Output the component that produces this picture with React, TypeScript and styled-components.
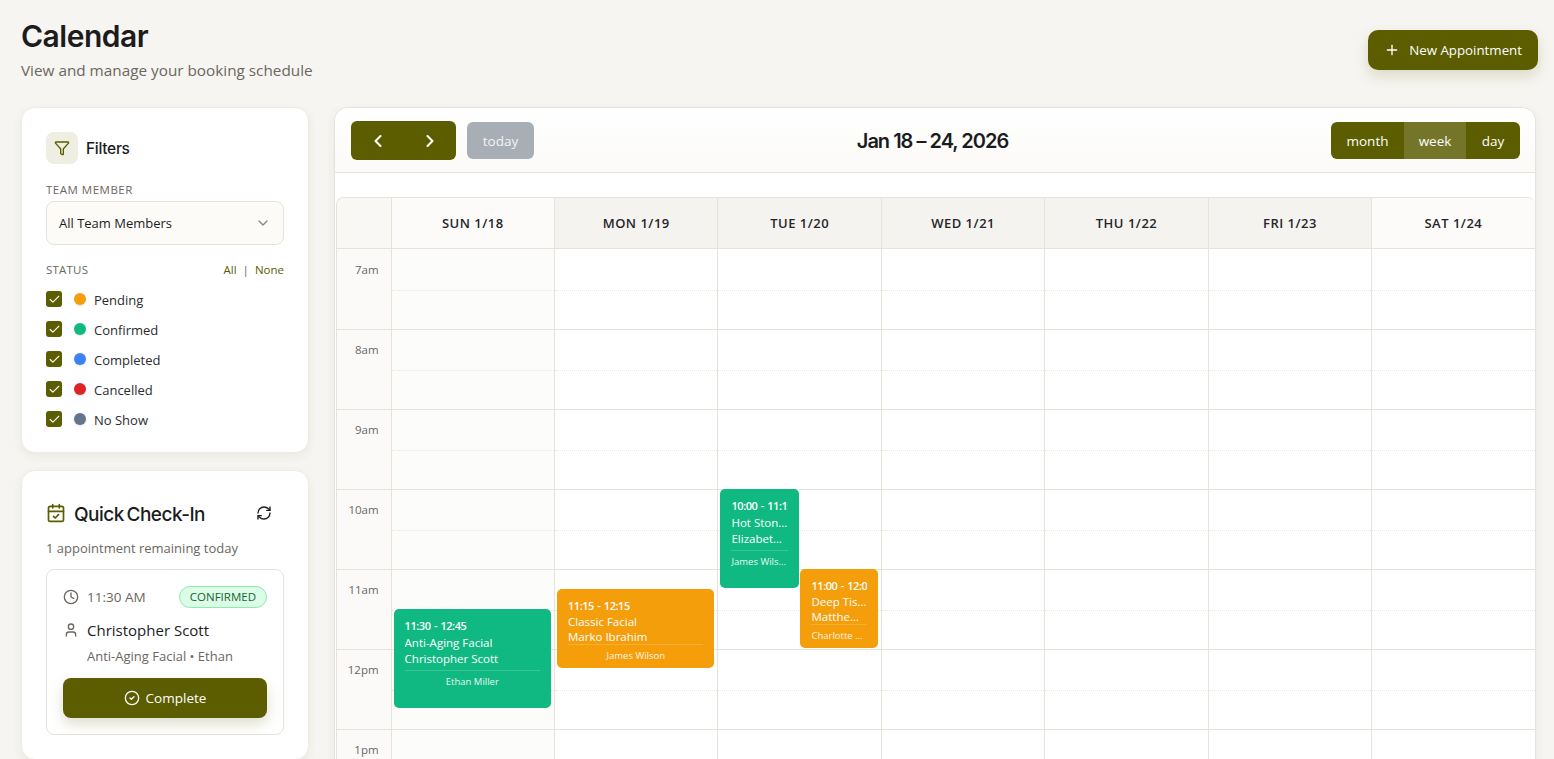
import styled, { createGlobalStyle } from 'styled-components'
import { CalendarCheck, Check, ChevronDown, ChevronLeft, ChevronRight, CircleCheck, Clock, Filter, Plus, RefreshCw, User } from 'lucide-react'

const olive = '#5c5c00'
const ink = '#1c1c1e'
const muted = '#6b6760'
const line = '#e7e2da'
const body = `'Open Sans', 'Noto Sans', sans-serif`
const display = `Inter, 'Liberation Sans', sans-serif`

const GlobalStyle = createGlobalStyle`
    html, body {
        margin: 0;
        height: 100%;
        overflow: hidden;
        background: #f6f5f1;
        font-family: ${body};
        color: ${ink};
    }
    * { box-sizing: border-box; }
`

const Page = styled.div`
    height: 759px;
    overflow: hidden;
    padding: 16px 16px 0 21px;
`
const PageHeader = styled.header`
    display: flex;
    justify-content: space-between;
    align-items: flex-start;
    height: 91px;
`
const PageTitle = styled.h1`
    margin: 0;
    font-family: ${display};
    font-size: 30px;
    line-height: 40px;
    font-weight: 600;
    letter-spacing: -0.5px;
`
const PageSubtitle = styled.p`
    margin: 3px 0 0;
    font-size: 15.3px;
    line-height: 22px;
    color: ${muted};
`
const NewButton = styled.button`
    display: flex;
    align-items: center;
    gap: 9px;
    height: 40px;
    margin: 14px 0 0;
    padding: 0 16px;
    border: 0;
    border-radius: 10px;
    background: ${olive};
    color: #fff;
    font-family: ${body};
    font-size: 13.3px;
    white-space: nowrap;
    box-shadow: 0 6px 14px rgba(92, 92, 0, 0.18);
`
const Columns = styled.div`
    display: grid;
    grid-template-columns: 288px 1202px;
    gap: 25px;
    align-items: start;
`
const Sidebar = styled.aside`
    display: flex;
    flex-direction: column;
    gap: 17px;
`
const Card = styled.section`
    background: #fff;
    border: 1px solid #efece6;
    border-radius: 14px;
    box-shadow: 0 3px 10px rgba(60, 50, 30, 0.07);
`
const FilterCard = styled(Card)`
    height: 346px;
    padding: 24px 24px 0;
`
const FilterHead = styled.div`
    display: flex;
    align-items: center;
    gap: 8px;
    height: 32px;
`
const IconTile = styled.div`
    display: flex;
    align-items: center;
    justify-content: center;
    width: 32px;
    height: 32px;
    border-radius: 8px;
    background: #eeeee3;
    color: ${olive};
`
const CardTitle = styled.h2`
    margin: 0;
    font-family: ${display};
    font-size: 15.5px;
    font-weight: 500;
    letter-spacing: -0.3px;
`
const FieldLabel = styled.div`
    font-size: 11.5px;
    line-height: 16px;
    letter-spacing: 0.2px;
    font-weight: 500;
    color: ${muted};
`
const TeamLabel = styled(FieldLabel)`
    margin-top: 18px;
    letter-spacing: 0.5px;
`
const SelectBox = styled.div`
    display: flex;
    align-items: center;
    justify-content: space-between;
    height: 44px;
    margin-top: 3px;
    padding: 0 12px;
    border: 1px solid ${line};
    border-radius: 8px;
    background: #fcfbf8;
    font-size: 13px;
    color: #8a8780;
    & span { color: ${ink}; }
`
const StatusHead = styled.div`
    display: flex;
    align-items: center;
    justify-content: space-between;
    margin-top: 17px;
`
const StatusLinks = styled.div`
    display: flex;
    gap: 6px;
    font-size: 11.5px;
    line-height: 16px;
    color: ${olive};
    & i { font-style: normal; color: ${muted}; }
`
const StatusList = styled.div`
    display: flex;
    flex-direction: column;
    gap: 14px;
    margin-top: 13px;
`
const StatusRow = styled.label`
    display: flex;
    align-items: center;
    height: 16px;
    font-size: 13px;
    color: #2c2c30;
`
const StatusName = styled.span`
    padding-top: 2px;
`
const CheckBox = styled.span`
    display: flex;
    align-items: center;
    justify-content: center;
    width: 16px;
    height: 16px;
    margin-right: 12px;
    border-radius: 3px;
    background: ${olive};
    color: #fff;
`
const Dot = styled.span<{ $color: string }>`
    width: 12px;
    height: 12px;
    margin-right: 8px;
    border-radius: 50%;
    background: ${props => props.$color};
    box-shadow: 0 1px 2px rgba(0, 0, 0, 0.12);
`
const CheckInCard = styled(Card)`
    height: 290px;
    padding: 24px 24px 0;
`
const CheckInHead = styled.div`
    display: flex;
    align-items: center;
    height: 36px;
    padding-right: 12px;
    & svg:first-child { color: ${olive}; margin-right: 8px; }
    & svg:last-child { margin-left: auto; color: ${ink}; }
`
const CheckInTitle = styled.h2`
    margin: 0;
    padding-top: 2px;
    font-family: ${display};
    font-size: 19px;
    font-weight: 500;
    letter-spacing: -0.5px;
    word-spacing: -2px;
`
const Remaining = styled.p`
    margin: 7px 0 0;
    font-size: 13px;
    line-height: 20px;
    color: ${muted};
`
const AppointmentBox = styled.div`
    height: 166px;
    margin-top: 11px;
    padding: 16px;
    border: 1px solid ${line};
    border-radius: 8px;
`
const AppointmentTop = styled.div`
    display: flex;
    align-items: center;
    height: 22px;
    font-size: 13.5px;
    color: ${muted};
    & svg { margin-right: 8px; }
`
const StatusBadge = styled.span`
    margin-left: auto;
    height: 22px;
    padding: 0 10px;
    border: 1px solid #86efac;
    border-radius: 11px;
    background: #dcfce7;
    color: #166534;
    font-size: 11.5px;
    line-height: 20px;
`
const ClientRow = styled.div`
    display: flex;
    align-items: center;
    height: 24px;
    margin-top: 10px;
    font-size: 15px;
    color: ${ink};
    & svg { margin-right: 8px; color: ${muted}; }
`
const ClientMeta = styled.div`
    margin: 4px 0 0 24px;
    font-size: 13px;
    line-height: 20px;
    color: ${muted};
`
const CompleteButton = styled.button`
    display: flex;
    align-items: center;
    justify-content: center;
    gap: 6px;
    width: 100%;
    height: 40px;
    margin-top: 12px;
    border: 0;
    border-radius: 8px;
    background: ${olive};
    color: #fff;
    font-family: ${body};
    font-size: 13.5px;
    box-shadow: 0 6px 14px rgba(92, 92, 0, 0.2);
`
const CalendarCard = styled.section`
    height: 700px;
    overflow: hidden;
    background: #fff;
    border: 1px solid ${line};
    border-radius: 14px;
    box-shadow: 0 3px 10px rgba(60, 50, 30, 0.07);
`
const Toolbar = styled.div`
    display: flex;
    justify-content: space-between;
    align-items: center;
    height: 65px;
    padding: 0 15px 0 16px;
    border-bottom: 1px solid ${line};
    background: linear-gradient(180deg, #fff 0%, #fbfaf8 100%);
`
const ToolbarLeft = styled.div`
    display: flex;
    align-items: center;
    gap: 11px;
`
const NavGroup = styled.div`
    display: flex;
    align-items: center;
    justify-content: space-around;
    width: 105px;
    height: 39px;
    padding: 1px 0 0 1px;
    border-radius: 6px;
    background: ${olive};
    color: #fff;
`
const TodayButton = styled.button`
    width: 67px;
    height: 37px;
    padding: 2px 0 0;
    border: 0;
    border-radius: 6px;
    background: #a8aeb6;
    color: #f2f3f4;
    font-family: ${body};
    font-size: 13.5px;
`
const RangeTitle = styled.h2`
    margin: 2px 0 0;
    font-family: ${display};
    font-size: 20px;
    font-weight: 600;
    letter-spacing: -1px;
`
const ViewGroup = styled.div`
    display: flex;
    height: 37px;
    overflow: hidden;
    border-radius: 6px;
    background: ${olive};
`
const ViewButton = styled.button<{ $active?: boolean; $width: number }>`
    width: ${props => props.$width}px;
    padding: 2px 0 0;
    border: 0;
    background: ${props => props.$active ? '#75752a' : 'transparent'};
    color: #fff;
    font-family: ${body};
    font-size: 13.5px;
`
const GridWrap = styled.div`
    margin: 24px 0.4px 0 1px;
    border-style: solid;
    border-color: ${line};
    border-width: 1px 0 0 1px;
    border-radius: 8px 8px 0 0;
    overflow: hidden;
`
const Grid = styled.div`
    display: grid;
    grid-template-columns: 53.6px repeat(7, 1fr);
`
const HeadCell = styled.div<{ $shade?: boolean }>`
    display: flex;
    align-items: center;
    justify-content: center;
    height: 51px;
    border-left: 1px solid ${line};
    border-bottom: 1px solid ${line};
    background: ${props => props.$shade ? '#f5f3ef' : '#fcfbfa'};
    font-size: 13px;
    font-weight: 600;
    letter-spacing: 0.5px;
    color: #26262a;
    &:first-child { border-left: 0; background: #f9f8f5; }
`
const TimeColumn = styled.div`
    padding-top: 1px;
    background: #fbfaf8;
`
const TimeSlot = styled.div`
    height: 80px;
    padding: 12px 12px 0 0;
    border-bottom: 1px solid ${line};
    text-align: right;
    font-size: 11.5px;
    line-height: 16px;
    color: ${muted};
`
const DayColumn = styled.div<{ $today?: boolean }>`
    position: relative;
    padding-top: 1px;
    border-left: 1px solid ${line};
    background: ${props => props.$today ? '#fcfcfb' : '#fff'};
`
const HourSlot = styled.div`
    height: 80px;
    border-bottom: 1px solid ${line};
    &::before {
        content: '';
        display: block;
        height: 40px;
        border-bottom: 1px dotted #ece8e1;
    }
`
const EventCard = styled.div<{ $color: string }>`
    position: absolute;
    overflow: hidden;
    padding: 9px 11px;
    border-radius: 5px;
    background: ${props => props.$color};
    color: #fff;
`
const EventTime = styled.div<{ $short: boolean }>`
    overflow: hidden;
    margin-bottom: ${props => props.$short ? 0 : 1}px;
    white-space: nowrap;
    font-size: 11px;
    font-weight: 600;
    line-height: 16px;
    letter-spacing: -0.45px;
    word-spacing: 1px;
`
const EventText = styled.div<{ $short: boolean }>`
    overflow: hidden;
    white-space: nowrap;
    text-overflow: ellipsis;
    font-size: 11.5px;
    line-height: ${props => props.$short ? 15 : 16}px;
`
const EventStaff = styled.div<{ $short: boolean }>`
    overflow: hidden;
    margin-top: ${props => props.$short ? 0 : 3}px;
    padding-top: 3px;
    border-top: 1px solid rgba(255, 255, 255, 0.2);
    white-space: nowrap;
    text-overflow: ellipsis;
    text-align: center;
    font-size: 9.5px;
    line-height: 16px;
    opacity: 0.9;
`

const statuses = [
    { label: 'Pending', color: '#f59e0b' },
    { label: 'Confirmed', color: '#10b981' },
    { label: 'Completed', color: '#3b82f6' },
    { label: 'Cancelled', color: '#dc2626' },
    { label: 'No Show', color: '#64748b' },
]
const days = [
    { label: 'SUN 1/18', shade: false },
    { label: 'MON 1/19', shade: true },
    { label: 'TUE 1/20', shade: true },
    { label: 'WED 1/21', shade: true },
    { label: 'THU 1/22', shade: true },
    { label: 'FRI 1/23', shade: true },
    { label: 'SAT 1/24', shade: false },
]
const hours = ['7am', '8am', '9am', '10am', '11am', '12pm', '1pm']
const green = '#10b981'
const amber = '#f59e0b'
const events = [
    { day: 0, top: 360, height: 99, left: 2, right: 3, color: green, time: '11:30 - 12:45', title: 'Anti-Aging Facial', client: 'Christopher Scott', staff: 'Ethan Miller' },
    { day: 1, top: 340, height: 79, left: 2, right: 3, color: amber, time: '11:15 - 12:15', title: 'Classic Facial', client: 'Marko Ibrahim', staff: 'James Wilson' },
    { day: 2, top: 240, height: 99, left: 2, right: 82, color: green, time: '10:00 - 11:15', title: 'Hot Stone Massage', client: 'Elizabeth Taylor', staff: 'James Wilson' },
    { day: 2, top: 320, height: 79, left: 82, right: 3, color: amber, time: '11:00 - 12:00', title: 'Deep Tissue Massage', client: 'Matthew Johnson', staff: 'Charlotte Davis' },
]

export default function App() {
    return (
        <Page>
            <GlobalStyle />
            <PageHeader>
                <div>
                    <PageTitle>Calendar</PageTitle>
                    <PageSubtitle>View and manage your booking schedule</PageSubtitle>
                </div>
                <NewButton><Plus size={16} strokeWidth={2} />New Appointment</NewButton>
            </PageHeader>
            <Columns>
                <Sidebar>
                    <FilterCard>
                        <FilterHead>
                            <IconTile><Filter size={16} strokeWidth={2} /></IconTile>
                            <CardTitle>Filters</CardTitle>
                        </FilterHead>
                        <TeamLabel>TEAM MEMBER</TeamLabel>
                        <SelectBox><span>All Team Members</span><ChevronDown size={16} /></SelectBox>
                        <StatusHead>
                            <FieldLabel>STATUS</FieldLabel>
                            <StatusLinks>All <i>|</i> None</StatusLinks>
                        </StatusHead>
                        <StatusList>
                            {statuses.map(status => (
                                <StatusRow key={status.label}>
                                    <CheckBox><Check size={13} strokeWidth={2} /></CheckBox>
                                    <Dot $color={status.color} />
                                    <StatusName>{status.label}</StatusName>
                                </StatusRow>
                            ))}
                        </StatusList>
                    </FilterCard>
                    <CheckInCard>
                        <CheckInHead>
                            <CalendarCheck size={20} strokeWidth={2} />
                            <CheckInTitle>Quick Check-In</CheckInTitle>
                            <RefreshCw size={16} strokeWidth={2} />
                        </CheckInHead>
                        <Remaining>1 appointment remaining today</Remaining>
                        <AppointmentBox>
                            <AppointmentTop>
                                <Clock size={16} />
                                11:30 AM
                                <StatusBadge>CONFIRMED</StatusBadge>
                            </AppointmentTop>
                            <ClientRow><User size={16} />Christopher Scott</ClientRow>
                            <ClientMeta>Anti-Aging Facial • Ethan</ClientMeta>
                            <CompleteButton><CircleCheck size={16} />Complete</CompleteButton>
                        </AppointmentBox>
                    </CheckInCard>
                </Sidebar>
                <CalendarCard>
                    <Toolbar>
                        <ToolbarLeft>
                            <NavGroup><ChevronLeft size={20} strokeWidth={2.5} /><ChevronRight size={20} strokeWidth={2.5} /></NavGroup>
                            <TodayButton>today</TodayButton>
                        </ToolbarLeft>
                        <RangeTitle>Jan 18 – 24, 2026</RangeTitle>
                        <ViewGroup>
                            <ViewButton $width={73}>month</ViewButton>
                            <ViewButton $width={62} $active>week</ViewButton>
                            <ViewButton $width={54}>day</ViewButton>
                        </ViewGroup>
                    </Toolbar>
                    <GridWrap>
                        <Grid>
                            <HeadCell />
                            {days.map(day => <HeadCell key={day.label} $shade={day.shade}>{day.label}</HeadCell>)}
                            <TimeColumn>
                                {hours.map(hour => <TimeSlot key={hour}>{hour}</TimeSlot>)}
                            </TimeColumn>
                            {days.map((day, index) => (
                                <DayColumn key={day.label} $today={index === 0}>
                                    {hours.map(hour => <HourSlot key={hour} />)}
                                    {events.filter(event => event.day === index).map(event => {
                                        const short = event.height < 90
                                        return (
                                            <EventCard
                                                key={event.time}
                                                $color={event.color}
                                                style={{ top: event.top, height: event.height, left: event.left, right: event.right }}
                                            >
                                                <EventTime $short={short}>{event.time}</EventTime>
                                                <EventText $short={short}>{event.title}</EventText>
                                                <EventText $short={short}>{event.client}</EventText>
                                                <EventStaff $short={short}>{event.staff}</EventStaff>
                                            </EventCard>
                                        )
                                    })}
                                </DayColumn>
                            ))}
                        </Grid>
                    </GridWrap>
                </CalendarCard>
            </Columns>
        </Page>
    )
}
